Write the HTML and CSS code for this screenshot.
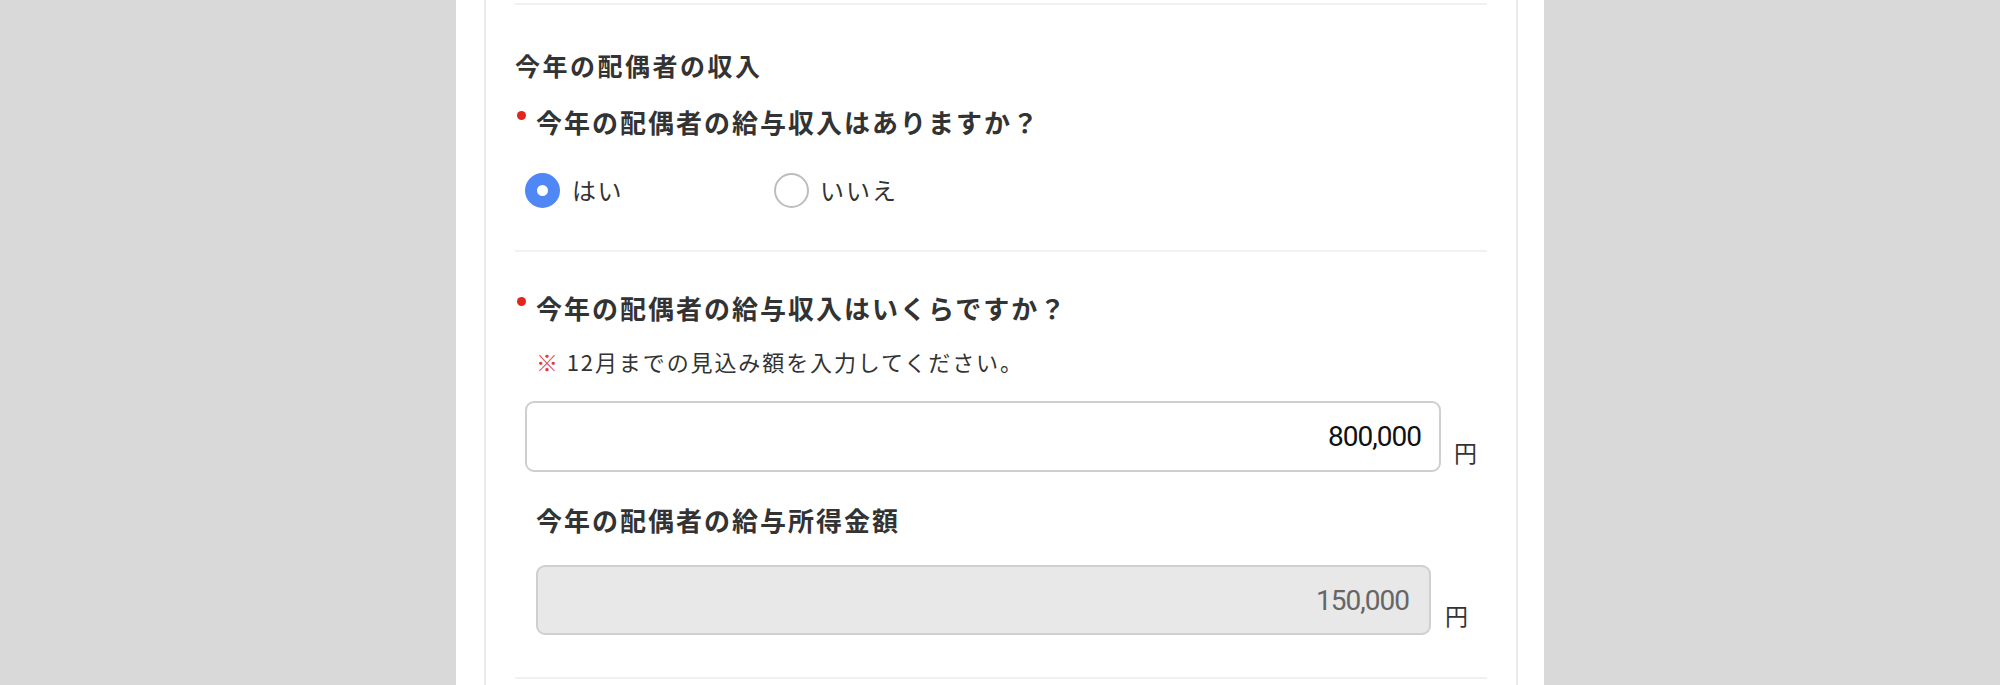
FILE: index.html
```html
<!DOCTYPE html>
<html lang="ja">
<head>
<meta charset="utf-8">
<title>今年の配偶者の収入</title>
<link rel="stylesheet" href="styles.css">
</head>
<body>
<div class="page">
  <div class="card">
    <div class="divider"></div>
    <section class="section">
      <h2 class="heading">今年の配偶者の収入</h2>
      <p class="question required">今年の配偶者の給与収入はありますか？</p>
      <div class="radios">
        <label class="option"><span class="radio checked"></span><span class="opt-text">はい</span></label>
        <label class="option"><span class="radio"></span><span class="opt-text">いいえ</span></label>
      </div>
    </section>
    <div class="divider"></div>
    <section class="section">
      <p class="question required q2">今年の配偶者の給与収入はいくらですか？</p>
      <p class="note"><span class="kome">※</span> 12月までの見込み額を入力してください。</p>
      <div class="field-row first">
        <div class="input">800,000</div>
        <span class="unit">円</span>
      </div>
      <div class="sub">
        <p class="sub-label">今年の配偶者の給与所得金額</p>
        <div class="field-row second">
          <div class="input disabled">150,000</div>
          <span class="unit">円</span>
        </div>
      </div>
    </section>
    <div class="divider"></div>
  </div>
</div>
</body>
</html>
```

FILE: styles.css
```css
html, body {
  margin: 0;
  padding: 0;
}
body {
  background: #d9d9d9;
  font-family: "Noto Sans CJK JP", "Noto Sans", sans-serif;
  color: #333;
  height: 685px;
  overflow: hidden;
}
.page {
  width: 1088px;
  margin: 0 auto;
  background: #fff;
  padding: 0 26px 0 28px;
  box-sizing: border-box;
  height: 685px;
}
.card {
  border-left: 2px solid #ebebeb;
  border-right: 2px solid #ebebeb;
  height: 685px;
  padding-top: 3px;
  box-sizing: border-box;
}
.divider {
  height: 2px;
  background: #f1f1f1;
  margin: 0 29px;
}
.section {
  padding: 0 29px;
}
.heading {
  margin: 42px 0 0;
  font-size: 25px;
  line-height: 36px;
  font-weight: 700;
  letter-spacing: 2.5px;
  color: #333;
}
.question {
  margin: 21px 0 0;
  font-size: 26px;
  line-height: 36px;
  font-weight: 700;
  letter-spacing: 2px;
  color: #333;
  position: relative;
  padding-left: 21px;
}
.required::before {
  content: "";
  position: absolute;
  left: 2px;
  top: 7px;
  width: 9px;
  height: 9px;
  border-radius: 50%;
  background: #e3261b;
}
.q2 {
  margin-top: 38px;
}
.radios {
  display: flex;
  margin: 32px 0 0 10px;
  height: 36px;
  align-items: center;
}
.option {
  display: flex;
  align-items: center;
  width: 249px;
}
.radio {
  width: 35px;
  height: 35px;
  border-radius: 50%;
  box-sizing: border-box;
  border: 2px solid #bdbdbd;
  background: #fff;
  flex: none;
}
.radio.checked {
  border: 12px solid #4f87f5;
  background: #fff;
}
.opt-text {
  margin-left: 12px;
  font-size: 24px;
  line-height: 36px;
  letter-spacing: 1.5px;
  color: #333;
}
.option:last-child .opt-text {
  margin-left: 11px;
  letter-spacing: 2px;
}
.section:nth-of-type(1) {
  padding-bottom: 42px;
}
.note {
  margin: 20px 0 0 21px;
  font-size: 22px;
  line-height: 30px;
  letter-spacing: 1.9px;
  color: #333;
}
.kome {
  color: #e53a2f;
}
.field-row {
  display: flex;
  align-items: flex-end;
}
.field-row.first {
  margin: 25px 10px 0 10px;
}
.input {
  flex: 1;
  height: 71px;
  box-sizing: border-box;
  border: 2px solid #cfcfcf;
  border-radius: 9px;
  background: #fff;
  font-family: Roboto, "Liberation Sans", sans-serif;
  font-size: 28px;
  letter-spacing: -1px;
  color: #111;
  display: flex;
  align-items: center;
  justify-content: flex-end;
  padding-right: 18px;
}
.input.disabled {
  background: #e8e8e8;
  color: #666;
  height: 70px;
  padding-right: 20px;
}
.unit {
  flex: none;
  font-size: 23px;
  line-height: 30px;
  margin: 0 0 5px 13px;
  color: #333;
}
.sub {
  margin: 0 19px 0 21px;
}
.sub-label {
  margin: 30px 0 0;
  font-size: 26px;
  line-height: 36px;
  font-weight: 700;
  letter-spacing: 2px;
  color: #333;
}
.field-row.second {
  margin-top: 27px;
}
.field-row.second .unit {
  margin-left: 14px;
}
.section:nth-of-type(2) {
  padding-bottom: 42px;
}
```
